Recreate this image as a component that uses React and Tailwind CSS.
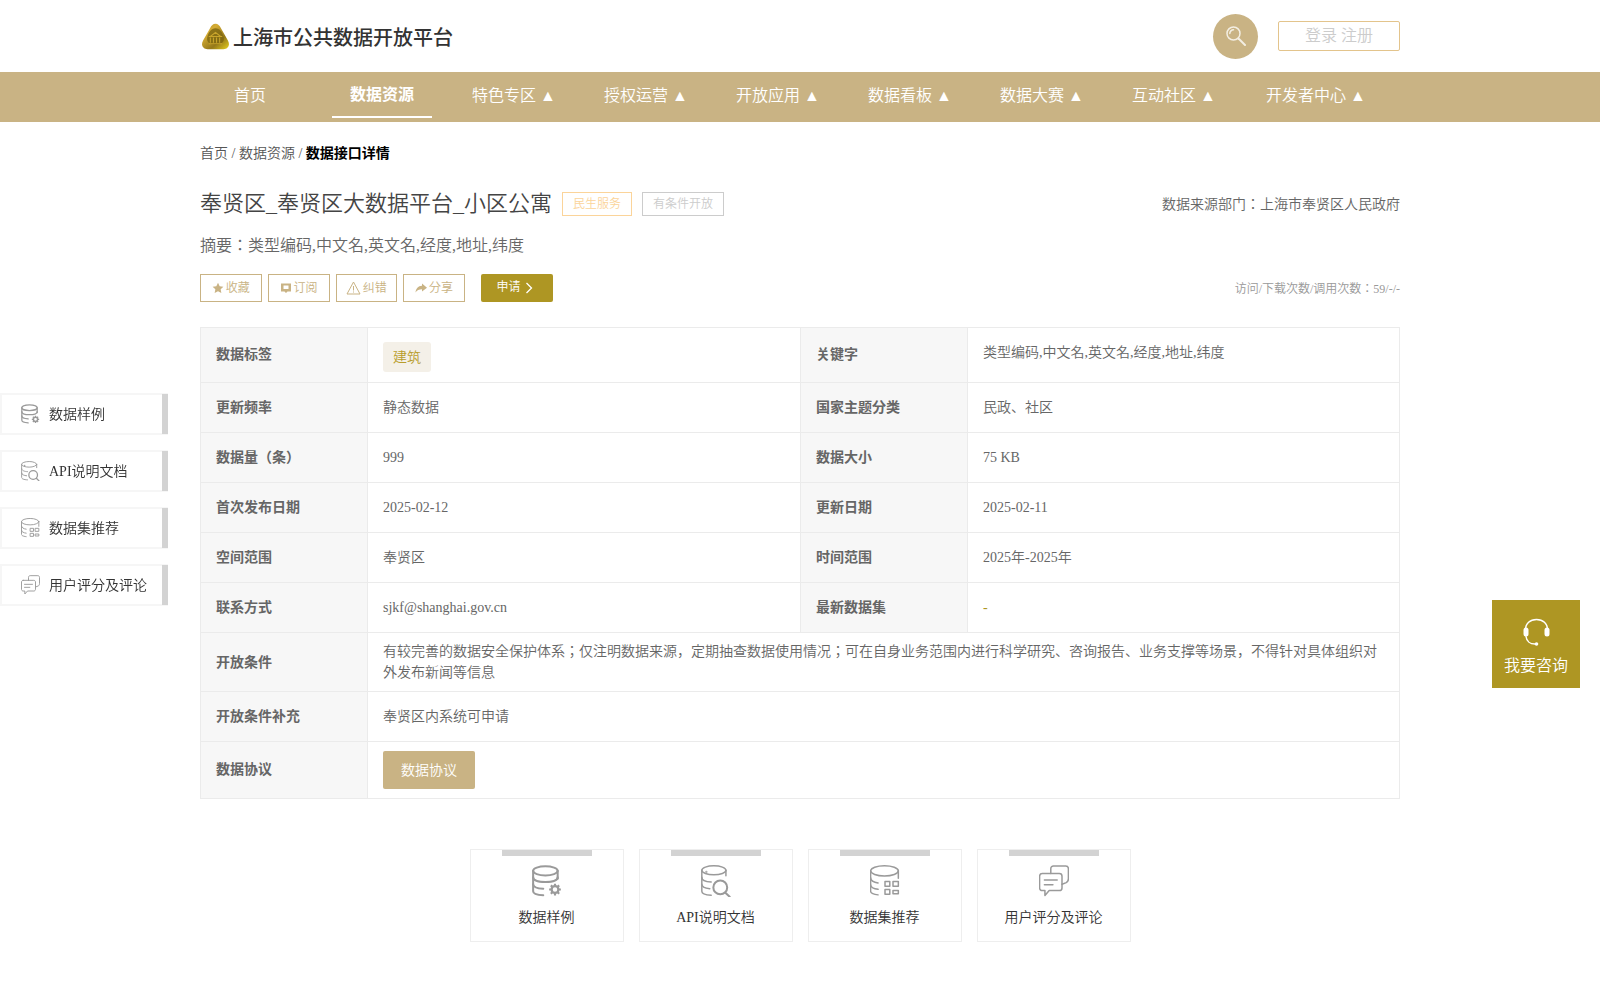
import React from 'react';

function Logo() {
  return (
    <svg width="29" height="27" viewBox="0 0 28 26" className="shrink-0">
      <defs>
        <linearGradient id="lg" x1="0" y1="0" x2="0.9" y2="1">
          <stop offset="0" stopColor="#a98a2a" />
          <stop offset="0.3" stopColor="#d6ad35" />
          <stop offset="0.7" stopColor="#95791a" />
          <stop offset="1" stopColor="#dcc51e" />
        </linearGradient>
      </defs>
      <path d="M14 .8c2.400 0 3.800 1.600 5.400 4.400l6.600 11.600c1.600 3 1.400 5.600-.8 7.200-1.600 1.200-4 1.400-11.200 1.400s-9.600-.2-11.200-1.400C.6 22.400.4 19.800 2 16.800L8.600 5.200C10.200 2.400 11.600.8 14 .8z" fill="url(#lg)" />
      <path d="M14 5c4 0 7 4 8 9 .8 4-2 7-8 7s-8.800-3-8-7c1-5 4-9 8-9z" fill="#7d6712" opacity=".8" />
      <path d="M7.500 13h13M9 14v5M12 14v5M15 14v5M18 14v5M7.500 20h13M9 13l5-4 5 4" stroke="#c9a52c" strokeWidth="1" fill="none" />
    </svg>
  );
}

function DbTop({ children, ...p }) {
  return (
    <svg viewBox="0 0 28 30" fill="none" stroke="#9a9a9a" strokeWidth="1.500" strokeLinecap="round" strokeLinejoin="round" {...p}>
      {children}
    </svg>
  );
}

function DbGear(p) {
  return (
    <DbTop {...p} strokeWidth="1.900">
      <ellipse cx="12.500" cy="5.500" rx="11.500" ry="4.300" />
      <path d="M1 5.500v19c0 2.200 3 3.500 9.500 3.800" />
      <path d="M1 11.500c0 3 5.500 4.500 11.500 4.500s11.500-1.500 11.500-4.500V13" />
      <path d="M1 18c0 2.500 4.500 4 9.500 4.300" />
      <path d="M24 5.500v7" />
      <circle cx="21.500" cy="23" r="3.200" strokeWidth="2.200" />
      <path d="M21.500 17.500v2M21.500 26.500v2M16 23h2M25 23h2M17.600 19.100l1.400 1.400M24 25.500l1.400 1.400M17.600 26.900l1.400-1.400M24 20.500l1.400-1.400" strokeWidth="2" strokeLinecap="butt" />
    </DbTop>
  );
}

function DbSearch(p) {
  return (
    <DbTop {...p} strokeWidth="1.400">
      <ellipse cx="12" cy="5" rx="11.300" ry="4.200" />
      <path d="M.7 5v19.500c0 2.300 3 3.500 8.800 3.800" />
      <path d="M.7 11.500c0 2.800 4 4.300 8.800 4.500" />
      <path d="M.7 18c0 2.500 3.500 3.800 7.500 4.200" />
      <path d="M23.300 5v5" />
      <circle cx="5" cy="6.500" r=".3" />
      <circle cx="18" cy="21" r="6.500" strokeWidth="1.900" />
      <path d="M22.800 26l4 3.800" strokeWidth="1.900" />
    </DbTop>
  );
}

function DbGrid(p) {
  return (
    <DbTop {...p} strokeWidth="1.400">
      <ellipse cx="13.500" cy="5.500" rx="13" ry="4.800" />
      <path d="M.5 5.500v19c0 1.500 1.500 2.800 7 3.500" />
      <path d="M.5 12c0 2.500 3 4.200 7 4.800" />
      <path d="M.5 18.500c0 2.200 3 3.800 7 4.300" />
      <path d="M26.500 5.500v7" />
      <rect x="14" y="15.500" width="4.500" height="4.500" />
      <rect x="21.500" y="15.500" width="5" height="4.500" />
      <rect x="14" y="23" width="4.500" height="4.500" />
      <rect x="21.500" y="24" width="5" height="3" />
    </DbTop>
  );
}

function Chat(p) {
  return (
    <DbTop {...p} strokeWidth="1.400">
      <path d="M3 8h16c1.400 0 2.500 1 2.500 2.500v11c0 1.400-1 2.500-2.500 2.500H9.500l-4 4.500v-4.500H3C1.600 24 .5 23 .5 21.500v-11C.5 9 1.600 8 3 8z" />
      <path d="M11 8V3.500C11 2 12 1 13.500 1H25c1.500 0 2.500 1 2.500 2.500v9.500c0 2-1 3-2 3.500l-4 1.500" />
      <path d="M5 14h12M5 18.500h8" />
    </DbTop>
  );
}

const side = [
  ['数据样例', DbGear],
  ['API说明文档', DbSearch],
  ['数据集推荐', DbGrid],
  ['用户评分及评论', Chat],
];

const navs = [
  ['首页', 0, 0],
  ['数据资源', 1, 0],
  ['特色专区', 0, 1],
  ['授权运营', 0, 1],
  ['开放应用', 0, 1],
  ['数据看板', 0, 1],
  ['数据大赛', 0, 1],
  ['互动社区', 0, 1],
  ['开发者中心', 0, 1],
];

function Lab({ children, className = '' }) {
  return <td className={`border border-[#ebebeb] bg-[#f7f7f7] px-[15px] font-bold text-[#666] ${className}`}>{children}</td>;
}
function Val({ children, className = 'text-[#666]', ...p }) {
  return <td className={`border border-[#ebebeb] px-[15px] ${className}`} {...p}>{children}</td>;
}

function Act({ icon, children }) {
  return (
    <button className="flex h-[28px] flex-1 items-center justify-center gap-[2px] border border-[#c9b384] text-[12px] text-[#c9b384]">
      {icon}
      {children}
    </button>
  );
}

export default function App() {
  return (
    <div className="relative min-h-[1000px] bg-white pb-[59px] text-[14px] font-[350] text-[#333] [font-family:'Liberation_Serif','Noto_Sans_CJK_JP',serif]">
      <header className="mx-auto flex h-[72px] w-[1200px] items-center">
        <div className="ml-[1px] flex items-center gap-[3px]">
          <Logo />
          <span className="pt-[3px] text-[20px] font-medium text-[#333]">上海市公共数据开放平台</span>
        </div>
        <div className="ml-auto flex items-center gap-[20px]">
          <div className="flex h-[45px] w-[45px] items-center justify-center rounded-full bg-[#c9b384]">
            <svg width="20" height="20" viewBox="0 0 20 20" fill="none" stroke="#f3eee2" strokeWidth="1.500" strokeLinecap="round">
              <circle cx="7.500" cy="7.500" r="6.500" />
              <path d="M3.800 7.500a3.700 3.700 0 0 1 3.700-3.700" />
              <path d="M12.500 12.500l6.500 6.500" strokeWidth="2" />
            </svg>
          </div>
          <div className="flex h-[30px] w-[122px] items-center justify-center rounded-[2px] border border-[#e3c48c] text-[16px] text-[#cccccc]">登录 注册</div>
        </div>
      </header>

      <nav className="h-[50px] bg-[#c9b384]">
        <div className="mx-auto flex h-full w-[1200px] text-[16px] text-white">
          {navs.map(([t, a, m], i) => (
            <div
              key={t}
              className={
                (i === 8 ? 'w-[120px]' : 'mr-[32px] w-[100px]') +
                ' relative flex h-full shrink-0 items-center justify-center whitespace-nowrap ' +
                (a ? 'pb-[4px] font-bold' : 'pb-[2px]')
              }
            >
              <span>{m ? t + ' ▲' : t}</span>
              {a ? <span className="absolute bottom-[4px] left-0 h-[2px] w-full bg-white" /> : null}
            </div>
          ))}
        </div>
      </nav>

      <main className="mx-auto w-[1200px]">
        <div className="mt-[22px] h-[20px] leading-[20px] text-[#555]">
          首页 / 数据资源 / <span className="font-bold text-black">数据接口详情</span>
        </div>

        <div className="mt-[28px] flex h-[24px] items-center">
          <h1 className="text-[22px] font-[350] leading-[24px] text-[#444]">奉贤区_奉贤区大数据平台_小区公寓</h1>
          <span className="ml-[10px] flex h-[24px] w-[70px] items-center justify-center border border-[#fbd49a] text-[12px] text-[#fbd49a]">民生服务</span>
          <span className="ml-[10px] flex h-[24px] w-[82px] items-center justify-center border border-[#cccccc] text-[12px] text-[#cccccc]">有条件开放</span>
          <span className="ml-auto text-[14px] text-[#666]">数据来源部门：上海市奉贤区人民政府</span>
        </div>

        <p className="mt-[18px] h-[24px] text-[16px] leading-[24px] text-[#666]">摘要：类型编码,中文名,英文名,经度,地址,纬度</p>

        <div className="mt-[16px] flex h-[28px] items-center">
          <div className="flex w-[265px] gap-[6px]">
            <Act icon={<svg width="12" height="12" viewBox="0 0 24 24" fill="#c9b384"><path d="M12 1.500l3.300 6.900 7.500 1-5.500 5.200 1.400 7.500L12 18.500l-6.700 3.600 1.400-7.500L1.200 9.400l7.500-1z" /></svg>}>收藏</Act>
            <Act icon={<svg width="12" height="12" viewBox="0 0 12 12" fill="#c9b384"><path fillRule="evenodd" d="M1 1.500h10v8H7.500L6 11 4.500 9.500H1zM3.500 3.500v3.500h5V3.500z" /></svg>}>订阅</Act>
            <Act icon={<svg width="15" height="14" viewBox="0 0 15 14" fill="none" stroke="#c9b384" strokeLinejoin="round"><path d="M7.500 1L14 13H1z" /><path d="M7.500 5v4.500M7.500 10.500v1" /></svg>}>纠错</Act>
            <Act icon={<svg width="12" height="12" viewBox="0 0 12 12" fill="#c9b384"><path d="M7 1.500L12 5.800 7 9.500V7.200C4 7.200 2 8.200.5 10.500 1 6.500 3 4 7 3.800z" /></svg>}>分享</Act>
          </div>
          <button className="ml-[16px] flex h-[28px] w-[72px] items-center justify-center gap-[4px] rounded-[2px] bg-[#ae9623] pb-[2px] pr-[5px] text-[12px] text-white">
            申请
            <svg width="8" height="12" viewBox="0 0 8 12" fill="none" stroke="white" strokeWidth="1.300" className="mt-[2px]"><path d="M1.500 1l5 5-5 5" /></svg>
          </button>
          <span className="ml-auto pt-[2px] text-[12px] text-[#999]">访问/下载次数/调用次数：59/-/-</span>
        </div>

        <table className="mt-[25px] w-full table-fixed border-collapse text-[14px]">
          <colgroup>
            <col className="w-[167px]" />
            <col className="w-[433px]" />
            <col className="w-[167px]" />
            <col />
          </colgroup>
          <tbody>
            <tr className="h-[55px]">
              <Lab className="pb-[2px]">数据标签</Lab>
              <Val>
                <span className="mt-[4px] flex h-[30px] w-[48px] items-center justify-center rounded-[3px] bg-[#f4f0e8] text-[#b89d2c]">建筑</span>
              </Val>
              <Lab className="pb-[2px]">关键字</Lab>
              <Val className="pb-[6px] text-[#666]">类型编码,中文名,英文名,经度,地址,纬度</Val>
            </tr>
            <tr className="h-[50px]">
              <Lab>更新频率</Lab>
              <Val>静态数据</Val>
              <Lab>国家主题分类</Lab>
              <Val>民政、社区</Val>
            </tr>
            <tr className="h-[50px]">
              <Lab>数据量（条）</Lab>
              <Val>999</Val>
              <Lab>数据大小</Lab>
              <Val>75 KB</Val>
            </tr>
            <tr className="h-[50px]">
              <Lab>首次发布日期</Lab>
              <Val>2025-02-12</Val>
              <Lab>更新日期</Lab>
              <Val>2025-02-11</Val>
            </tr>
            <tr className="h-[50px]">
              <Lab>空间范围</Lab>
              <Val>奉贤区</Val>
              <Lab>时间范围</Lab>
              <Val>2025年-2025年</Val>
            </tr>
            <tr className="h-[50px]">
              <Lab>联系方式</Lab>
              <Val>sjkf@shanghai.gov.cn</Val>
              <Lab>最新数据集</Lab>
              <Val className="text-[#ae9623]">-</Val>
            </tr>
            <tr className="h-[59px]">
              <Lab>开放条件</Lab>
              <Val colSpan={3} className="leading-[21px] text-[#666]">
                有较完善的数据安全保护体系；仅注明数据来源，定期抽查数据使用情况；可在自身业务范围内进行科学研究、咨询报告、业务支撑等场景，不得针对具体组织对外发布新闻等信息
              </Val>
            </tr>
            <tr className="h-[50px]">
              <Lab>开放条件补充</Lab>
              <Val colSpan={3}>奉贤区内系统可申请</Val>
            </tr>
            <tr className="h-[57px]">
              <Lab className="pb-[1px]">数据协议</Lab>
              <Val colSpan={3}>
                <span className="flex h-[38px] w-[92px] items-center justify-center rounded-[2px] bg-[#c9b384] text-white">数据协议</span>
              </Val>
            </tr>
          </tbody>
        </table>

        <div className="mt-[50px] flex justify-center gap-[15px]">
          {side.map(([t, I]) => (
            <div key={t} className="relative flex h-[93px] w-[154px] flex-col items-center border border-[#eeeeee]">
              <span className="h-[6px] w-[90px] bg-[#d3d3d3]" />
              <I width="30" height="32" className="mt-[9px]" />
              <span className="mt-[11px] text-[14px] leading-[20px] text-[#333]">{t}</span>
            </div>
          ))}
        </div>
      </main>

      <aside className="fixed left-0 top-[393px] flex w-[168px] flex-col gap-[15px]">
        {side.map(([t, I]) => (
          <div key={t} className="flex h-[42px] items-center border-2 border-[#f6f6f6] pl-[19px]">
            <I width="19" height="20" />
            <span className="ml-[9px] text-[14px] text-[#333]">{t}</span>
            <span className="ml-auto h-[40px] w-[6px] shrink-0 -mr-[2px] bg-[#d3d3d3]" />
          </div>
        ))}
      </aside>

      <div className="fixed left-[1492px] top-[600px] flex h-[88px] w-[88px] flex-col items-center bg-[#ae9623] pt-[18px] text-[16px] text-white">
        <svg width="27" height="28" viewBox="0 0 27 28" fill="none" stroke="white" strokeWidth="1.500" strokeLinecap="round">
          <path d="M2.500 12C2.500 5.500 7 1.500 13.500 1.500S24.500 5.500 24.500 12" />
          <rect x="0.500" y="9.500" width="5" height="9" rx="2.500" fill="white" stroke="none" />
          <rect x="21.500" y="9.500" width="5" height="9" rx="2.500" fill="white" stroke="none" />
          <path d="M3 18.500c.5 4.500 4 7.500 9 7.500" />
          <circle cx="13.500" cy="26" r="1.800" fill="white" stroke="none" />
        </svg>
        <span className="mt-[8px] leading-[24px]">我要咨询</span>
      </div>
    </div>
  );
}
